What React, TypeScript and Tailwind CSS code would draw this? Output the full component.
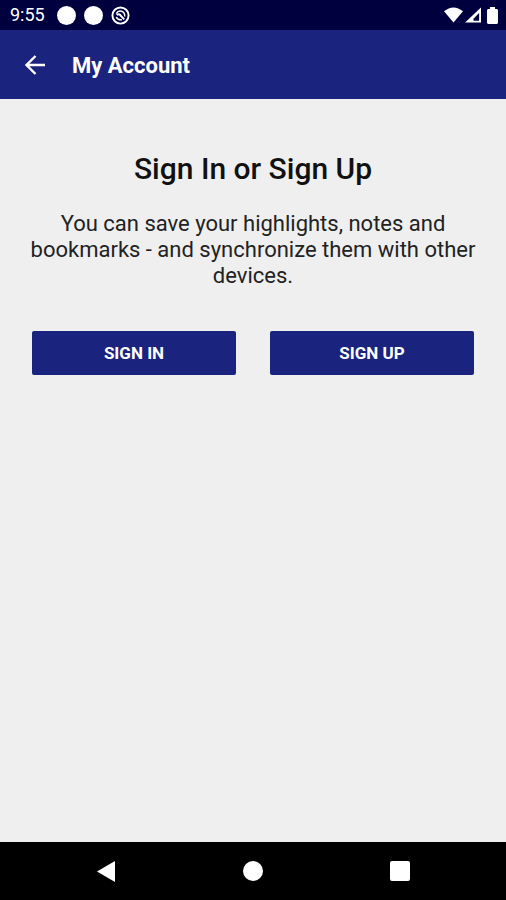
export default function App() {
  return (
    <div className="flex min-h-screen flex-col bg-[#efefef] font-[Roboto,sans-serif] text-[#111111]">
      <div className="flex h-[30px] items-center justify-between bg-[#00003f] pl-2.5 pr-2 text-white">
        <div className="flex items-center gap-2">
          <span className="mr-1 text-[18px] leading-5">9:55</span>
          <span className="size-[19px] rounded-full bg-white" />
          <span className="size-[19px] rounded-full bg-white" />
          <svg viewBox="0 0 20 20" className="size-[19px]" fill="none" stroke="currentColor">
            <circle cx="10" cy="10" r="8.5" strokeWidth="2" />
            <path d="M5.500 8Q7.500 4.500 11 5.500Q14.500 6.500 14.500 11M5.500 11.500Q7 15 11.500 14.500" strokeWidth="1.500" />
            <path d="M9.500 9.500l4.500 4.500M6 9.500q2-1.500 4 0" strokeWidth="2" />
          </svg>
        </div>
        <div className="flex items-center gap-0.5">
          <svg viewBox="0 0 20 16" className="h-4 w-[19px]" fill="currentColor"><path d="M0 4Q10-4 20 4L10 16z" /></svg>
          <svg viewBox="0 0 17 16" className="h-4 w-4" fill="currentColor"><path d="M17 0v16H0z" /><path d="M15 6v8H9v-2z" fill="#00003f" /></svg>
          <svg viewBox="0 0 11 17" className="ml-1 h-[17px] w-[11px]" fill="currentColor"><path d="M3 0h5v2h2l1 1v13l-1 1H1l-1-1V3l1-1h2z" /></svg>
        </div>
      </div>
      <header className="flex h-[69px] items-center gap-6 bg-[#1a237e] px-6 pt-0.5 text-white">
        <button type="button" aria-label="Back">
          <svg viewBox="0 0 24 24" className="size-6" fill="none" stroke="currentColor" strokeWidth="2.400"><path d="M21 11H3M11.500 2L2.500 11l9 9" /></svg>
        </button>
        <h1 className="text-[22px] leading-7 font-bold">My Account</h1>
      </header>
      <main className="flex-1 px-4 pt-[52px] text-center">
        <h2 className="text-[30px] leading-9 font-medium">Sign In or Sign Up</h2>
        <p className="mt-6 text-[22px] leading-[26px] text-[#222222]">You can save your highlights, notes and bookmarks - and synchronize them with other devices.</p>
        <div className="mt-[42px] grid grid-cols-2 gap-[34px] px-4">
          <button type="button" className="h-11 rounded-xs bg-[#1a237e] pt-0.5 text-[17px] font-bold text-white">SIGN IN</button>
          <button type="button" className="h-11 rounded-xs bg-[#1a237e] pt-0.5 text-[17px] font-bold text-white">SIGN UP</button>
        </div>
      </main>
      <nav className="flex h-[58px] items-center justify-center gap-[127px] bg-black text-white">
        <button type="button" aria-label="Back"><svg viewBox="0 0 20 22" className="h-[22px] w-5" fill="currentColor"><path d="M19 1v21L1 11.500z" /></svg></button>
        <button type="button" aria-label="Home" className="size-5 rounded-full bg-white" />
        <button type="button" aria-label="Recent apps" className="size-5 rounded-xs bg-white" />
      </nav>
    </div>
  );
}
